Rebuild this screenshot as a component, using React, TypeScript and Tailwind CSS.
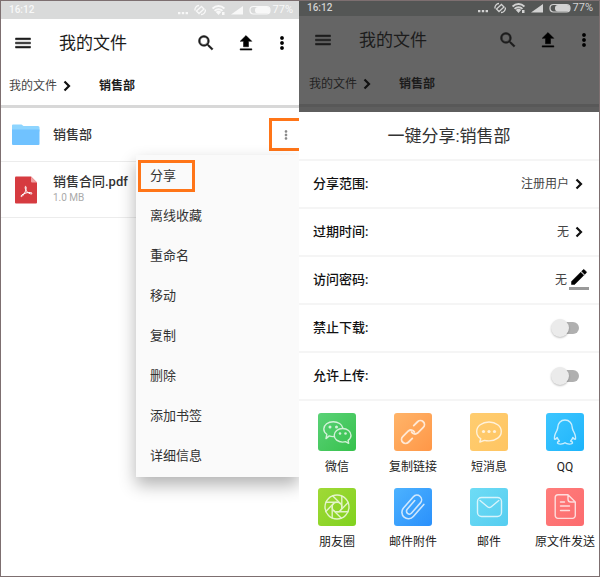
import type { ReactNode } from "react";
import clsx from "clsx";

const menuItems = [
  "分享",
  "离线收藏",
  "重命名",
  "移动",
  "复制",
  "删除",
  "添加书签",
  "详细信息",
];

const icons = {
  menu: "M3 18h18v-2H3v2zm0-5h18v-2H3v2zm0-7v2h18V6H3z",
  search:
    "M15.5 14h-.79l-.28-.27A6.47 6.47 0 0 0 16 9.5 6.5 6.5 0 1 0 9.5 16c1.61 0 3.09-.59 4.23-1.57l.27.28v.79l5 4.99L20.49 19l-4.99-5zm-6 0a4.5 4.5 0 1 1 0-9 4.5 4.5 0 0 1 0 9z",
  upload: "M5 20.5h14v-1.500H5v1.500zM5 10h4v6.500h6V10h4l-7-7z",
  more: "M12 8a2 2 0 1 0 0-4 2 2 0 0 0 0 4zm0 2a2 2 0 1 0 0 4 2 2 0 0 0 0-4zm0 6a2 2 0 1 0 0 4 2 2 0 0 0 0-4z",
  edit: "M3 17.250V21h3.750L17.810 9.940l-3.750-3.750L3 17.250zM20.710 7.040a1 1 0 0 0 0-1.410l-2.340-2.340a1 1 0 0 0-1.410 0l-1.830 1.830 3.750 3.750 1.830-1.830z",
};

const blades = [0, 45, 90, 135, 180, 225, 270, 315];

const targets: { name: string; color: string; icon: ReactNode }[] = [
  {
    name: "微信",
    color: "bg-linear-to-br from-[#5ad277] to-[#35c14b]",
    icon: (
      <>
        <path d="M15.7 23.6c-1.7.1-3.2-.2-4.500-.7L8 25.600l.8-4.300C6.900 19.900 5.800 18 5.800 16c0-4.200 4.300-7.300 9.500-7.300 4.900 0 8.800 2.700 9.500 6.400" />
        <path d="M24.6 15.5c-4.7 0-8.400 3-8.400 6.800s3.700 6.800 8.400 6.800c1 0 2-.1 2.900-.4l3.200 1.600-.6-3c1.800-1.200 2.900-3 2.900-5 0-3.800-3.700-6.800-8.400-6.800Z" />
        <g fill="white" stroke="none">
          <circle cx="12" cy="14" r="1.5" />
          <circle cx="18.5" cy="14" r="1.5" />
          <circle cx="22" cy="20.5" r="1.3" />
          <circle cx="27.5" cy="20.5" r="1.3" />
        </g>
      </>
    ),
  },
  {
    name: "复制链接",
    color: "bg-linear-to-br from-[#ffb469] to-[#ff9747]",
    icon: (
      <g transform="rotate(-45 19 19)" strokeWidth="1.8">
        <path d="M14 23H8.500a4 4 0 0 1 0-8h8a4 4 0 0 1 3.500 5" />
        <path d="M24 15h5.500a4 4 0 0 1 0 8h-8a4 4 0 0 1-3.500-5" />
      </g>
    ),
  },
  {
    name: "短消息",
    color: "bg-linear-to-br from-[#ffcd70] to-[#ffc562]",
    icon: (
      <>
        <path d="M19 9c-6.9 0-12.3 4.2-12.3 9.4 0 3.2 1.6 5.7 4 7.3L9.8 29l4.7-1.6c1.4.4 2.9.5 4.5.5 6.9 0 12.3-4.2 12.3-9.5S25.9 9 19 9Z" />
        <g fill="white" stroke="none">
          <circle cx="13.5" cy="18.5" r="1.6" />
          <circle cx="19" cy="18.5" r="1.6" />
          <circle cx="24.5" cy="18.5" r="1.6" />
        </g>
      </>
    ),
  },
  {
    name: "QQ",
    color: "bg-linear-to-br from-[#3cc6ff] to-[#1cb4fb]",
    icon: (
      <path d="M19 7c-4.4 0-7.2 3.3-7.2 7.3 0 1.3-.5 2.2-1 3.4-1.5 2.6-2.9 5-2.3 8.5 1 .4 2-.6 2.7-1.7.5 1.6 1.2 2.6 2.2 3.5-1.3.5-2.2 1.2-2 2.1.5 1.4 5.8 1.3 7.6-.3 1.8 1.6 7.1 1.7 7.6.3.2-.9-.7-1.6-2-2.1 1-.9 1.7-1.9 2.2-3.5.7 1.1 1.7 2.1 2.7 1.700.6-3.500-.8-5.900-2.300-8.500-.5-1.200-1-2.100-1-3.400C26.200 10.300 23.400 7 19 7Z" />
    ),
  },
  {
    name: "朋友圈",
    color: "bg-linear-to-br from-[#a0d936] to-[#80d21e]",
    icon: (
      <>
        <circle cx="19" cy="19" r="12" />
        <circle cx="19" cy="19" r="4.8" />
        {blades.map((angle) => (
          <path
            key={angle}
            d="M19 14.200H8"
            transform={`rotate(${angle} 19 19)`}
          />
        ))}
      </>
    ),
  },
  {
    name: "邮件附件",
    color: "bg-linear-to-br from-[#4cb2ff] to-[#2a90fb]",
    icon: (
      <path
        transform="rotate(-49 19 19)"
        strokeWidth="1.6"
        d="M28 25.500H12a6.500 6.500 0 0 1 0-13H27a4.700 4.700 0 0 1 0 9.400H13.500a2.900 2.900 0 0 1 0-5.800H25"
      />
    ),
  },
  {
    name: "邮件",
    color: "bg-linear-to-br from-[#6edcf5] to-[#55cdf0]",
    icon: (
      <>
        <rect x="7.5" y="9.5" width="24" height="19" rx="4" />
        <path d="m10 12.5 7.500 6.200a3 3 0 0 0 3.800 0l7.500-6.200" />
      </>
    ),
  },
  {
    name: "原文件发送",
    color: "bg-linear-to-br from-[#ff7d7b] to-[#fc6b6e]",
    icon: (
      <>
        <path d="M22 6.800H12A2.800 2.800 0 0 0 9.200 9.600v18A2.800 2.800 0 0 0 12 30.400h14.500a2.800 2.800 0 0 0 2.800-2.800V14L22 6.800v4.400A2.800 2.800 0 0 0 24.800 14h4.500" />
        <path d="M14.500 14h4M14.500 18h9M14.500 22.500h9" />
      </>
    ),
  },
];

function Icon({ name, className }: { name: keyof typeof icons; className: string }) {
  return (
    <svg
      viewBox="0 0 24 24"
      className={className}
      fill="currentColor"
      stroke="currentColor"
      strokeWidth="0.6"
      aria-hidden="true"
    >
      <path d={icons[name]} />
    </svg>
  );
}

function Chevron() {
  return (
    <svg viewBox="0 0 8 12" className="w-2 h-3 shrink-0" aria-hidden="true">
      <path d="m1.500 1.500 4.500 4.500-4.500 4.500" fill="none" stroke="#111" strokeWidth="2.2" />
    </svg>
  );
}

function StatusBar({ dimmed }: { dimmed?: boolean }) {
  return (
    <div
      className={clsx(
        "flex items-center justify-between pl-2 pr-1.5",
        dimmed
          ? "h-[15px] pb-0.5 bg-[#545655] text-[#d2d2d2]"
          : "h-[18px] bg-[#d9dada] text-[#f8f8f8]",
      )}
    >
      <span className="text-[10px] leading-3 font-medium">16:12</span>
      <div className="flex items-center gap-1.5">
        <svg viewBox="0 0 10 12" className="w-2.5 h-3" fill="currentColor">
          <path d="M0 8h2.400v2.200H0zM3.800 8h2.400v2.200H3.800zM7.600 8H10v2.200H7.600z" />
        </svg>
        <svg
          viewBox="0 0 12 12"
          className="size-3"
          fill="none"
          stroke="currentColor"
          strokeWidth="1.3"
        >
          <path d="M7.500 2.500 10 5 5 9.500 2.500 7zM1 6.500C.6 4 2.500 1.500 5 1.500M11.400 5.500c.3 3-1.900 5-4.400 5" />
        </svg>
        <svg viewBox="0 0 13 12" className="w-[13px] h-3" fill="currentColor">
          <path d="M6.500 11 3.800 8a3.600 3.600 0 0 1 5.400 0z" />
          <path
            d="M.6 4.500a8.500 8.500 0 0 1 11.800 0M2.600 6.900a5.500 5.500 0 0 1 7.800 0"
            fill="none"
            stroke="currentColor"
            strokeWidth="2"
          />
          <path d="M10 8h2.500v3H10z" />
        </svg>
        <svg viewBox="0 0 12 12" className="size-3" fill="currentColor">
          <path d="M0 10.500 12 2v8.500z" />
        </svg>
        <svg viewBox="0 0 22 12" className="w-[22px] h-3">
          <rect
            x="1"
            y="2.500"
            width="20"
            height="7.500"
            rx="3.500"
            fill="none"
            stroke="currentColor"
            strokeWidth="1.2"
          />
          <rect x="6" y="3" width="15" height="6.500" rx="3" fill="currentColor" />
        </svg>
        <span className="-ml-1 text-[11px] leading-3">77%</span>
      </div>
    </div>
  );
}

function AppHeader({ dimmed }: { dimmed?: boolean }) {
  return (
    <header className={clsx(dimmed && "bg-[#656565]")}>
      <StatusBar dimmed={dimmed} />
      <div
        className={clsx(
          "flex items-center h-[47px] text-[#1c1c1c]",
          dimmed ? "pl-[14px] pr-[5px]" : "pl-3 pr-[7px]",
        )}
      >
        <button type="button" aria-label="菜单">
          <Icon name="menu" className="size-5" />
        </button>
        <h1 className="ml-[26px] mr-auto text-[17px] leading-6 whitespace-nowrap">
          我的文件
        </h1>
        <div className="flex items-center">
          <button type="button" aria-label="搜索" className="mr-5">
            <Icon name="search" className="size-5" />
          </button>
          <button type="button" aria-label="上传" className="mr-4 text-black">
            <Icon name="upload" className="size-5" />
          </button>
          <button type="button" aria-label="更多" className="text-black">
            <Icon name="more" className="size-5" />
          </button>
        </div>
      </div>
      <nav
        className={clsx(
          "flex items-center text-xs text-[#1c1c1c] border-b-[3px]",
          dimmed
            ? "h-11 pl-[10px] border-[#585858]"
            : "h-[42px] pl-2 border-[#d8d8d8]",
        )}
      >
        <a href="#" className={dimmed ? "text-[#222]" : "text-[#444]"}>
          我的文件
        </a>
        <span className="ml-1.5 mr-7">
          <Chevron />
        </span>
        <span className="font-bold">销售部</span>
      </nav>
    </header>
  );
}

function FileMenu() {
  return (
    <ul className="absolute left-[135px] right-0 top-[47px] py-px bg-[#fafafa] shadow-[0_8px_16px_rgba(0,0,0,0.3)]">
      {menuItems.map((item, i) => (
        <li key={item}>
          <button type="button" className="flex items-center w-full h-10 pl-0.5">
            <span
              className={clsx(
                "h-8 pl-[9px] pr-4 border-[3px] text-[13px] leading-[26px] text-[#333]",
                i === 0 ? "border-[#ff7518]" : "border-transparent",
              )}
            >
              {item}
            </span>
          </button>
        </li>
      ))}
    </ul>
  );
}

function FilesScreen() {
  return (
    <section className="flex flex-col overflow-hidden">
      <AppHeader />
      <div className="relative">
        <div className="flex items-center h-[54px] pl-[11px] border-b border-[#ececec]">
          <svg viewBox="0 0 28 22" className="w-7 h-[22px]" aria-hidden="true">
            <path d="M0 1.500Q0 .5 1 .5h8.500l2 1.500H26q1.500 0 1.500 1.500v4H0z" fill="#8ed5ff" />
            <path d="M0 5.500h27.500V20q0 1-1 1H1q-1 0-1-1z" fill="#70c2ff" />
          </svg>
          <span className="ml-[13px] mr-auto text-[13px] font-medium text-[#333]">
            销售部
          </span>
          <button
            type="button"
            aria-label="更多操作"
            className="flex items-center pl-[7px] w-[30px] h-[33px] border-[3px] border-r-0 border-[#ff7518] text-[#888]"
          >
            <Icon name="more" className="size-[14px]" />
          </button>
        </div>
        <div className="flex items-center h-14 pl-[13px] border-b border-[#ececec]">
          <svg viewBox="0 0 24 28" className="w-6 h-7" aria-hidden="true">
            <path d="M2 .5h15l6 6V26.500q0 1-1 1H2q-1 0-1-1v-25q0-1 1-1z" fill="#d63b40" />
            <path d="M17 .5v5q0 1 1 1h5z" fill="#f0a0a2" />
            <path
              d="M11.300 10.500c-.6 2 .6 4.300 2.500 5.900 1.500 1.200 3.500 2 4.200 1.300.6-1.100-2.300-1.600-5-1-2.600.6-5.600 2-6 3.300-.2 1 1 .8 2.200-.8 1.500-2 2.800-4.700 3-6.700.1-1.400-.4-2.600-.9-2z"
              fill="none"
              stroke="#fff"
              strokeWidth="1"
            />
          </svg>
          <div className="ml-[15px]">
            <p className="text-[13px] leading-4 font-medium text-[#333]">销售合同.pdf</p>
            <p className="text-[10px] leading-4 text-[#aaa]">1.0 MB</p>
          </div>
        </div>
        <FileMenu />
      </div>
    </section>
  );
}

function Field({
  label,
  htmlFor,
  children,
}: {
  label: string;
  htmlFor: string;
  children: ReactNode;
}) {
  return (
    <div className="flex items-center justify-between h-12 pl-[14px] border-t-2 border-[#f5f5f5] text-xs text-[#444]">
      <label htmlFor={htmlFor} className="text-[13px] font-medium text-[#111]">
        {label}
      </label>
      {children}
    </div>
  );
}

function Toggle({ id }: { id: string }) {
  return (
    <input
      id={id}
      type="checkbox"
      role="switch"
      className="appearance-none flex items-center w-6 h-3 mr-5 rounded-full bg-[#b0b0b0] before:block before:shrink-0 before:size-[18px] before:-ml-1 before:rounded-full before:bg-[#ebebeb] before:shadow-[0_1px_2px_rgba(0,0,0,0.25)] checked:before:ml-3"
    />
  );
}

function ShareScreen() {
  return (
    <section className="flex flex-col overflow-hidden bg-[#5e5e5e]">
      <AppHeader dimmed />
      <div className="grow mt-[5px] bg-white">
        <h2 className="h-[47px] pt-3 text-center text-[17px] leading-6 text-[#333]">
          一键分享:销售部
        </h2>
        <Field label="分享范围:" htmlFor="scope">
          <button id="scope" type="button" className="flex items-center gap-1.5 mr-4">
            注册用户
            <Chevron />
          </button>
        </Field>
        <Field label="过期时间:" htmlFor="expires">
          <button id="expires" type="button" className="flex items-center gap-1.5 mr-4">
            无
            <Chevron />
          </button>
        </Field>
        <Field label="访问密码:" htmlFor="password">
          <button id="password" type="button" className="flex items-center gap-0.5 mr-[10px]">
            无
            <span className="mb-1 border-b-[3px] border-[#999] text-black">
              <Icon name="edit" className="size-5" />
            </span>
          </button>
        </Field>
        <Field label="禁止下载:" htmlFor="no-download">
          <Toggle id="no-download" />
        </Field>
        <Field label="允许上传:" htmlFor="allow-upload">
          <Toggle id="allow-upload" />
        </Field>
        <div className="grid grid-cols-4 gap-y-[11px] -mr-1 pt-3 pb-6 border-t-2 border-[#f5f5f5]">
          {targets.map((target) => (
            <button
              key={target.name}
              type="button"
              className="flex flex-col items-center gap-1.5 text-xs leading-5 text-[#222] whitespace-nowrap"
            >
              <span className={clsx("rounded-[3px]", target.color)}>
                <svg
                  viewBox="0 0 38 38"
                  className="size-[38px] opacity-75"
                  fill="none"
                  stroke="white"
                  strokeWidth="1.4"
                  strokeLinecap="round"
                  strokeLinejoin="round"
                  aria-hidden="true"
                >
                  {target.icon}
                </svg>
              </span>
              {target.name}
            </button>
          ))}
        </div>
      </div>
    </section>
  );
}

export default function App() {
  return (
    <main className="grid grid-cols-[298fr_300fr] min-h-screen border border-[#7d6f70] bg-white font-['Roboto','Noto_Sans_CJK_SC',sans-serif]">
      <FilesScreen />
      <ShareScreen />
    </main>
  );
}
